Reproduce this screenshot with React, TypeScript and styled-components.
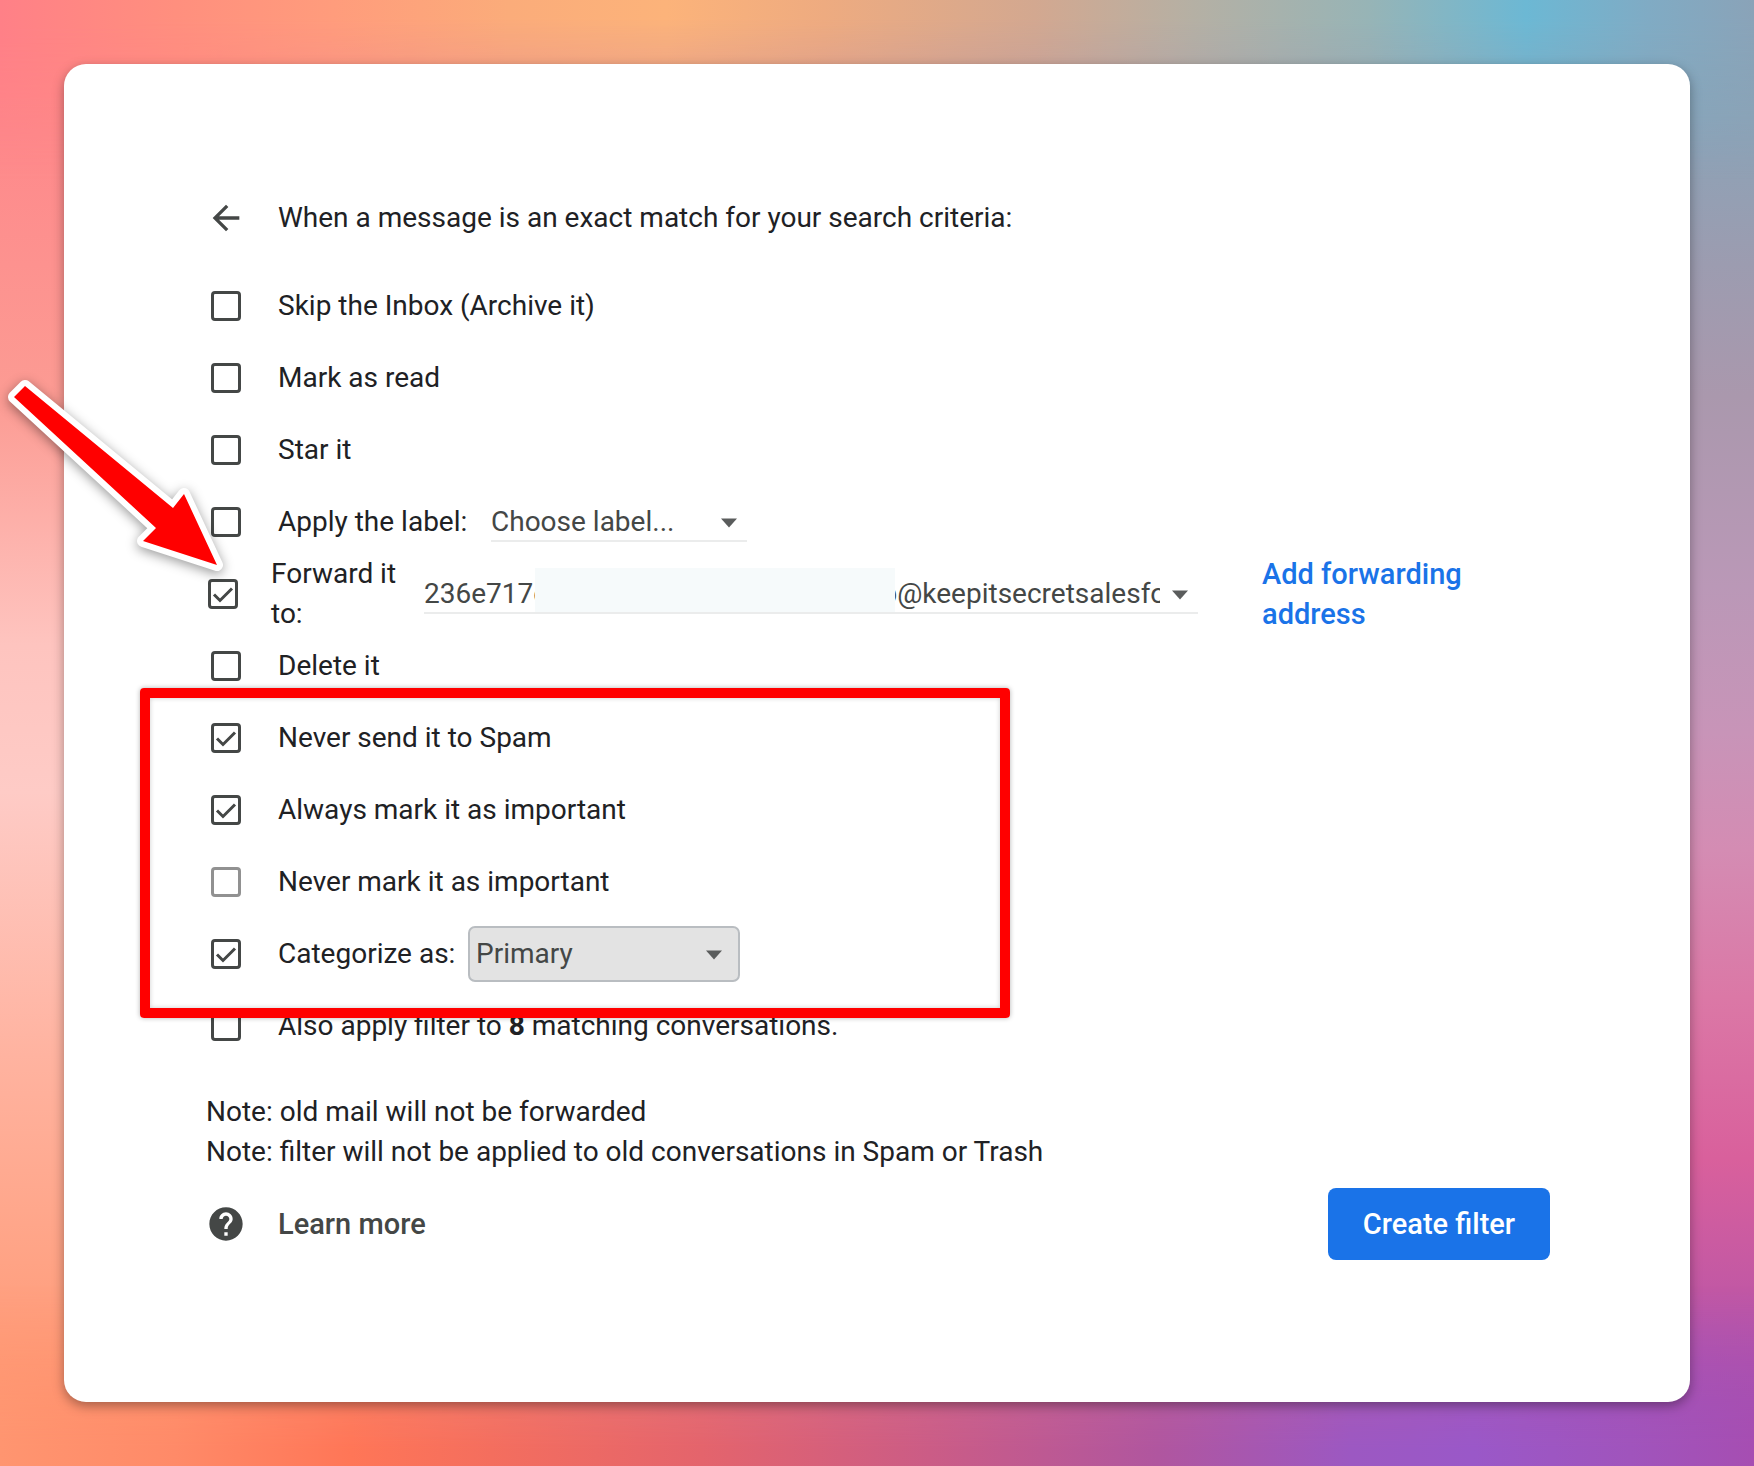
import React from "react";
import styled, { createGlobalStyle } from "styled-components";

const GlobalStyle = createGlobalStyle`
  *, *::before, *::after { box-sizing: border-box; }
  body {
    margin: 0;
    font-family: Roboto, "Liberation Sans", sans-serif;
    font-size: 28px;
    line-height: 40px;
    color: #202124;
  }
`;

const Backdrop = styled.div`
  position: relative;
  min-height: 100vh;
  padding: 64px;
  display: flex;
  background: linear-gradient(to bottom, #ff8087 0%, #fc9b93 27%, #fec4bf 44%, #fecbc6 54%, #ffb3a0 72%, #ff9a76 94%, #ff9570 100%);
`;

const RightWash = styled.div`
  position: absolute;
  inset: 0;
  background: linear-gradient(to bottom, #85a8ba 0%, #8ba3b7 8%, #9c9cb0 18%, #aa98ad 27%, #ba98b7 40%, #c894b8 50%, #d48cb3 58%, #db78a6 68%, #d9609c 79%, #c258a4 88%, #a852b2 96%, #a64eb2 100%);
  mask-image: linear-gradient(to right, transparent 10%, #000 90%);
`;

const EdgeWash = styled.div<{ $edge: "top" | "bottom" }>`
  position: absolute;
  left: 0;
  right: 0;
  height: 180px;
  ${(p) => p.$edge}: 0;
  background: ${(p) =>
    p.$edge === "top"
      ? "linear-gradient(to right, #ff8087 0%, #ff8f7e 10%, #ff9c7c 19%, #fbac7a 29%, #fcb37a 38%, #eeab80 47%, #d3a890 59%, #b5b0a4 68%, #97b4b6 78%, #6cb8d4 87%, #80abc4 94%, #8aa3b8 100%)"
      : "linear-gradient(to right, #ff9570 0%, #ff8a68 10%, #ff7657 20%, #f46e5e 28%, #e4646c 40%, #cb5c86 53%, #b0569f 66%, #9c58c2 77%, #9a58c8 84%, #a054bc 93%, #a64eb2 100%)"};
  mask-image: linear-gradient(to ${(p) => (p.$edge === "top" ? "bottom" : "top")}, #000 10%, transparent);
`;

const Card = styled.main`
  position: relative;
  flex: 1;
  padding: 126px 140px 142px 142px;
  background: #fff;
  border-radius: 22px;
  box-shadow: 0 4px 12px rgba(0, 0, 0, 0.35);
`;

const Header = styled.header`
  display: flex;
  align-items: center;
  gap: 32px;
  height: 56px;
  margin-bottom: 24px;
`;

const Title = styled.h1`
  margin: 0;
  font-size: 28px;
  font-weight: 400;
`;

const IconButton = styled.button`
  display: grid;
  place-items: center;
  width: 40px;
  height: 40px;
  padding: 0;
  border: 0;
  background: none;
  color: #444746;
`;

const Row = styled.div`
  display: flex;
  align-items: center;
  height: 72px;
`;

const Cell = styled.span<{ $narrow?: boolean }>`
  display: grid;
  place-items: center;
  flex: none;
  width: ${(p) => (p.$narrow ? 33 : 40)}px;
  margin-right: 32px;
`;

const Box = styled.input`
  appearance: none;
  grid-area: 1 / 1;
  width: 30px;
  height: 30px;
  margin: 0;
  border: 3px solid #444746;
  border-radius: 4px;
  background: #fff;
  &:disabled { border-color: #919191; }
  & + svg { display: none; }
  &:checked + svg { display: block; }
`;

const Tick = styled.svg`
  grid-area: 1 / 1;
  width: 30px;
  height: 30px;
  pointer-events: none;
`;

const Label = styled.label<{ $width?: number }>`
  flex: none;
  width: ${(p) => (p.$width ? p.$width + "px" : "auto")};
`;

const SelectWrap = styled.span<{ $width: number }>`
  position: relative;
  display: flex;
  flex: 0 1 ${(p) => p.$width}px;
  min-width: 0;
`;

const Caret = styled.svg<{ $inset: number }>`
  position: absolute;
  right: ${(p) => p.$inset}px;
  top: 50%;
  width: 16px;
  height: 10px;
  margin-top: -4px;
  pointer-events: none;
`;

const Select = styled.select<{ $filled?: boolean }>`
  appearance: none;
  width: 100%;
  height: ${(p) => (p.$filled ? 56 : 40)}px;
  padding: 0 38px 0 ${(p) => (p.$filled ? 6 : 0)}px;
  border: ${(p) => (p.$filled ? "2px solid #b9bdc1" : "0")};
  border-bottom: 2px solid ${(p) => (p.$filled ? "#b9bdc1" : "#ebecec")};
  border-radius: ${(p) => (p.$filled ? 7 : 0)}px;
  background: ${(p) => (p.$filled ? "#e3e3e3" : "transparent")};
  color: #444746;
  font: inherit;
`;

const Redaction = styled.span`
  position: absolute;
  left: 111px;
  top: -6px;
  width: 360px;
  height: 44px;
  background: #f6fafb;
`;

const AddLink = styled.a`
  margin-left: 64px;
  width: 240px;
  color: #1a73e8;
  font-size: 29px;
  font-weight: 500;
  text-decoration: none;
`;

const Highlighted = styled.div`
  position: relative;
`;

const Outline = styled.div`
  position: absolute;
  z-index: 1;
  left: -66px;
  top: -14px;
  bottom: -28px;
  width: 870px;
  border: 10px solid #ff0000;
  border-radius: 4px;
  box-shadow: 0 0 5px rgba(0, 0, 0, 0.3), inset 0 0 5px rgba(0, 0, 0, 0.2);
  pointer-events: none;
`;

const Notes = styled.p`
  margin: 30px 0 16px;
`;

const Footer = styled.footer`
  display: flex;
  align-items: center;
  height: 72px;
`;

const LearnMore = styled.a`
  display: flex;
  align-items: center;
  gap: 32px;
  color: #444746;
  font-size: 29px;
  font-weight: 500;
  text-decoration: none;
`;

const CreateButton = styled.button`
  margin-left: auto;
  width: 222px;
  height: 72px;
  border: 0;
  border-radius: 8px;
  background: #1a73e8;
  color: #fff;
  font: inherit;
  font-size: 29px;
  font-weight: 500;
`;

const Pointer = styled.svg`
  position: absolute;
  z-index: 2;
  left: -64px;
  top: 306px;
  width: 240px;
  height: 220px;
  overflow: visible;
  filter: drop-shadow(0 3px 6px rgba(0, 0, 0, 0.4));
  pointer-events: none;
`;

function Checkbox({ id, narrow, ...rest }: { id: string; narrow?: boolean; defaultChecked?: boolean; disabled?: boolean }) {
  return (
    <Cell $narrow={narrow}>
      <Box type="checkbox" id={id} {...rest} />
      <Tick viewBox="0 0 30 30" fill="none" stroke="#444746" strokeWidth="3">
        <path d="M6 15.5 12 21.5 24 9.5" />
      </Tick>
    </Cell>
  );
}

function DropArrow({ inset = 10 }: { inset?: number }) {
  return (
    <Caret viewBox="0 0 16 10" $inset={inset}>
      <path d="M0 0.5H16L8 9.5Z" fill="#5a5c5c" />
    </Caret>
  );
}

function Option({ id, text, ...rest }: { id: string; text: React.ReactNode; defaultChecked?: boolean; disabled?: boolean }) {
  return (
    <Row>
      <Checkbox id={id} {...rest} />
      <Label htmlFor={id}>{text}</Label>
    </Row>
  );
}

const forwardAddress = "236e717e" + "\u00a0".repeat(48) + "b@keepitsecretsalesfo";

export default function App() {
  return (
    <>
      <GlobalStyle />
      <Backdrop>
        <RightWash />
        <EdgeWash $edge="top" />
        <EdgeWash $edge="bottom" />
        <Card>
          <Header>
            <IconButton type="button" aria-label="Back">
              <svg width="40" height="40" viewBox="0 0 24 24" fill="currentColor">
                <path d="M20 11H7.83l5.59-5.59L12 4l-8 8 8 8 1.41-1.41L7.83 13H20v-2z" />
              </svg>
            </IconButton>
            <Title>When a message is an exact match for your search criteria:</Title>
          </Header>

          <Option id="skip" text="Skip the Inbox (Archive it)" />
          <Option id="read" text="Mark as read" />
          <Option id="star" text="Star it" />
          <Row>
            <Checkbox id="apply" />
            <Label htmlFor="apply" $width={213}>Apply the label:</Label>
            <SelectWrap $width={256}>
              <Select aria-label="Label">
                <option>Choose label...</option>
              </Select>
              <DropArrow />
            </SelectWrap>
          </Row>
          <Row>
            <Checkbox id="forward" narrow defaultChecked />
            <Label htmlFor="forward" $width={153}>Forward it<br />to:</Label>
            <SelectWrap $width={774}>
              <Select aria-label="Forwarding address">
                <option>{forwardAddress}</option>
              </Select>
              <Redaction />
              <DropArrow />
            </SelectWrap>
            <AddLink href="#add">Add forwarding address</AddLink>
          </Row>
          <Option id="delete" text="Delete it" />
          <Highlighted>
            <Option id="spam" text="Never send it to Spam" defaultChecked />
            <Option id="always" text="Always mark it as important" defaultChecked />
            <Option id="never" text="Never mark it as important" disabled />
            <Row>
              <Checkbox id="category" defaultChecked />
              <Label htmlFor="category" $width={190}>Categorize as:</Label>
              <SelectWrap $width={272}>
                <Select aria-label="Category" $filled>
                  <option>Primary</option>
                </Select>
                <DropArrow inset={18} />
              </SelectWrap>
            </Row>
            <Outline />
          </Highlighted>
          <Option id="also" text={<>Also apply filter to <b>8</b> matching conversations.</>} />

          <Notes>
            Note: old mail will not be forwarded
            <br />
            Note: filter will not be applied to old conversations in Spam or Trash
          </Notes>
          <Footer>
            <LearnMore href="#learn">
              <svg width="40" height="40" viewBox="0 0 24 24" fill="currentColor">
                <path d="M12 2C6.48 2 2 6.48 2 12s4.48 10 10 10 10-4.48 10-10S17.52 2 12 2zm1 17h-2v-2h2v2zm2.07-7.75-.9.92C13.45 12.9 13 13.5 13 15h-2v-.5c0-1.1.45-2.1 1.17-2.83l1.24-1.26c.37-.36.59-.86.59-1.41 0-1.1-.9-2-2-2s-2 .9-2 2H8c0-2.21 1.79-4 4-4s4 1.79 4 4c0 .88-.36 1.68-.93 2.25z" />
              </svg>
              Learn more
            </LearnMore>
            <CreateButton type="button">Create filter</CreateButton>
          </Footer>

          <Pointer viewBox="0 0 240 220">
            <path
              d="M25 16 173 138 184 124 217 195 143 171 156 158 14 27Z"
              fill="#ff0000"
              stroke="#fff"
              strokeWidth="12"
              strokeLinejoin="round"
              paintOrder="stroke"
            />
          </Pointer>
        </Card>
      </Backdrop>
    </>
  );
}
